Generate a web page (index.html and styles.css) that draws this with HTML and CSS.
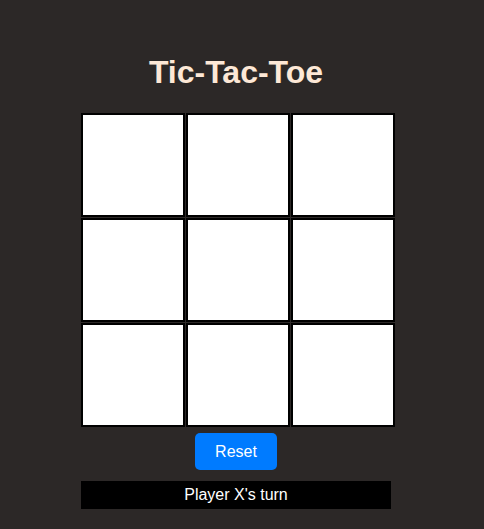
FILE: index.html
```html
<!DOCTYPE html>
<html lang="en">
<head>
<meta charset="utf-8">
<title>Tic-Tac-Toe</title>
<link rel="stylesheet" href="styles.css">
</head>
<body>
<main class="game">
  <h1 class="title">Tic-Tac-Toe</h1>
  <div class="board">
    <div class="cell"></div>
    <div class="cell"></div>
    <div class="cell"></div>
    <div class="cell"></div>
    <div class="cell"></div>
    <div class="cell"></div>
    <div class="cell"></div>
    <div class="cell"></div>
    <div class="cell"></div>
  </div>
  <button class="reset" type="button">Reset</button>
  <div class="status">Player X's turn</div>
</main>
</body>
</html>
```

FILE: styles.css
```css
html, body {
  margin: 0;
  padding: 0;
}
body {
  background: #2c2827;
  font-family: "Liberation Sans", Arial, sans-serif;
  min-height: 529px;
}
.game {
  display: flex;
  flex-direction: column;
  align-items: center;
  width: 472px;
  padding-top: 54px;
}
.title {
  margin: 0 0 22px;
  font-size: 32px;
  font-weight: bold;
  color: #fde8d6;
  line-height: 37px;
}
.board {
  display: grid;
  grid-template-columns: repeat(3, 100px);
  grid-template-rows: repeat(3, 100px);
  gap: 5px;
  width: 310px;
}
.cell {
  width: 100px;
  height: 100px;
  background: #ffffff;
  border: 2px solid #000000;
}
.reset {
  margin-top: 10px;
  width: 82px;
  height: 37px;
  border: none;
  border-radius: 5px;
  background: #007bff;
  color: #ffffff;
  font-family: "Liberation Sans", Arial, sans-serif;
  font-size: 16px;
  padding: 0;
}
.status {
  margin-top: 11px;
  width: 310px;
  height: 28px;
  line-height: 28px;
  background: #000000;
  color: #ffffff;
  text-align: center;
  font-size: 16px;
}
```
